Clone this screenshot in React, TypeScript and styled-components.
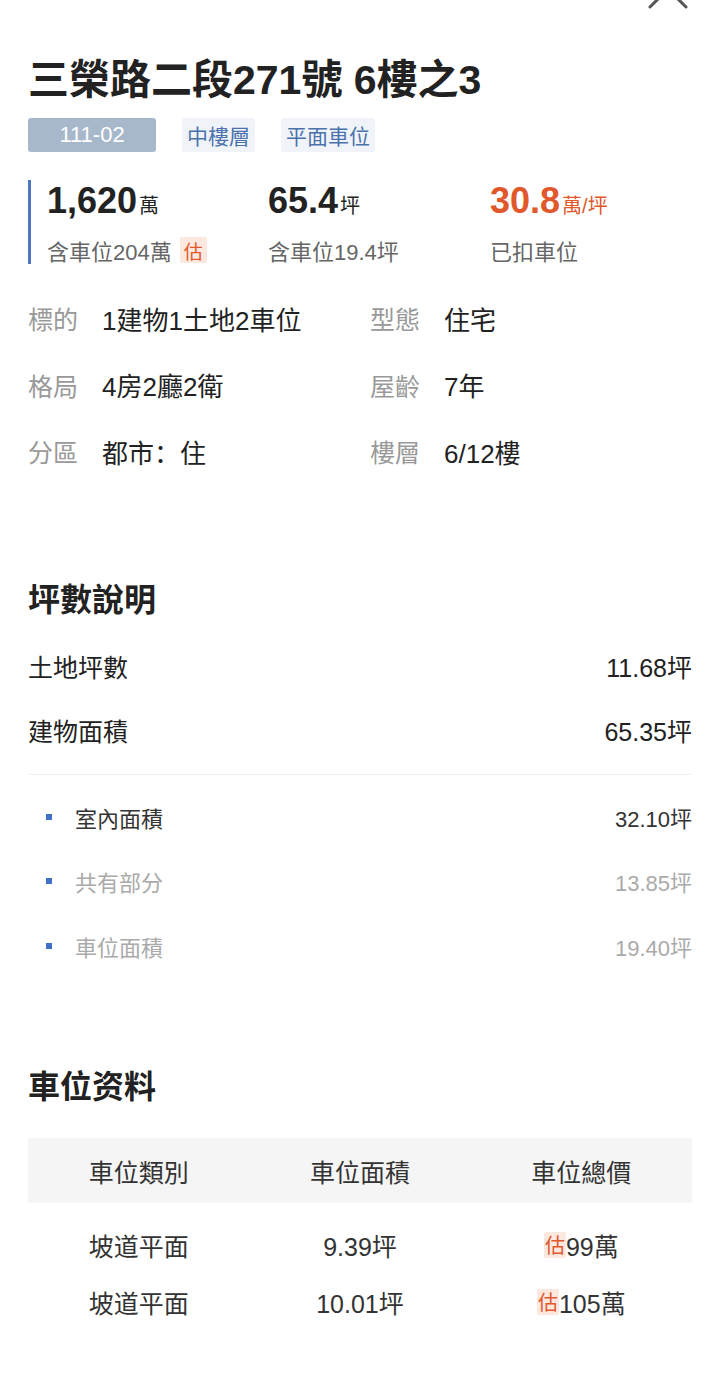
import React from "react";
import styled, { createGlobalStyle } from "styled-components";

const GlobalStyle = createGlobalStyle`
  html, body { margin: 0; padding: 0; background: #ffffff; }
  body {
    font-family: "Liberation Sans", "Noto Sans CJK SC", sans-serif;
    color: #222222;
    -webkit-font-smoothing: antialiased;
  }
  * { box-sizing: border-box; }
`;

const Page = styled.div`
  position: relative;
  width: 720px;
  min-height: 1378px;
  padding: 56px 28px 0;
  overflow: hidden;
`;

const CloseButton = styled.button`
  position: absolute;
  top: -31px;
  right: 32px;
  width: 40px;
  height: 40px;
  padding: 0;
  border: none;
  background: transparent;
  display: flex;
`;

const Title = styled.h1`
  margin: 0;
  font-size: 41px;
  line-height: 48px;
  font-weight: 700;
  color: #222222;
  letter-spacing: 0;
`;

const TagRow = styled.div`
  display: flex;
  gap: 26px;
  margin-top: 14px;
`;

const Tag = styled.span<{ $solid?: boolean }>`
  display: inline-flex;
  align-items: center;
  justify-content: center;
  height: 34px;
  padding: 0 5px;
  min-width: ${(p) => (p.$solid ? "128px" : "0")};
  border-radius: ${(p) => (p.$solid ? "3px" : "2px")};
  background: ${(p) => (p.$solid ? "#a8b8cb" : "#f0f4f9")};
  color: ${(p) => (p.$solid ? "#ffffff" : "#4b72ad")};
  font-size: ${(p) => (p.$solid ? "22px" : "21px")};
`;

const Stats = styled.div`
  display: grid;
  grid-template-columns: 221px 222px 1fr;
  margin-top: 28px;
  padding-left: 16px;
  border-left: 3px solid #4a78c2;
`;

const Stat = styled.div`
  display: flex;
  flex-direction: column;
`;

const BigValue = styled.div<{ $accent?: boolean }>`
  display: flex;
  align-items: baseline;
  height: 42px;
  line-height: 42px;
  font-size: 36px;
  font-weight: 700;
  color: ${(p) => (p.$accent ? "#e0582b" : "#222222")};
`;

const Unit = styled.span`
  margin-left: 2px;
  font-size: 20px;
  font-weight: 400;
`;

const SubText = styled.div`
  display: flex;
  align-items: center;
  gap: 8px;
  margin-top: 14px;
  height: 28px;
  font-size: 22px;
  color: #666666;
`;

const EstBadge = styled.span<{ $small?: boolean }>`
  display: inline-flex;
  align-items: center;
  justify-content: center;
  height: 26px;
  padding: 0 ${(p) => (p.$small ? "1px" : "4px")};
  border-radius: 2px;
  background: #fde8e0;
  color: #e0582b;
  font-size: ${(p) => (p.$small ? "20px" : "19px")};
`;

const InfoGrid = styled.div`
  display: grid;
  grid-template-columns: 342px 1fr;
  grid-auto-rows: 66.5px;
  margin-top: 21px;
`;

const InfoItem = styled.div`
  display: flex;
  align-items: center;
`;

const InfoLabel = styled.span`
  width: 74px;
  font-size: 25px;
  color: #999999;
`;

const InfoValue = styled.span`
  font-size: 26px;
  color: #222222;
`;

const SectionTitle = styled.h2<{ $gap: number }>`
  margin: ${(p) => p.$gap}px 0 0;
  font-size: 32px;
  line-height: 44px;
  font-weight: 700;
  color: #222222;
`;

const AreaList = styled.div`
  margin-top: 12px;
`;

const AreaRow = styled.div`
  display: flex;
  align-items: center;
  justify-content: space-between;
  height: 64px;
  font-size: 25px;
  color: #222222;
`;

const Divider = styled.div`
  height: 1px;
  margin: 12px 0 10px;
  background: #eeeeee;
`;

const SubRow = styled.div<{ $muted?: boolean }>`
  display: flex;
  align-items: center;
  height: 64.5px;
  padding-left: 18px;
  font-size: 22px;
  color: ${(p) => (p.$muted ? "#aaaaaa" : "#333333")};
`;

const Bullet = styled.span`
  width: 6px;
  height: 6px;
  margin-right: 23px;
  background: #3f72c6;
`;

const SubValue = styled.span`
  margin-left: auto;
`;

const Table = styled.div`
  margin-top: 29px;
`;

const TableRow = styled.div<{ $head?: boolean }>`
  display: grid;
  grid-template-columns: repeat(3, 1fr);
  align-items: center;
  height: ${(p) => (p.$head ? "65px" : "57px")};
  margin-bottom: ${(p) => (p.$head ? "13px" : "0")};
  background: ${(p) => (p.$head ? "#f5f5f5" : "transparent")};
  font-size: 25px;
  color: #333333;
`;

const Cell = styled.div`
  display: flex;
  align-items: center;
  justify-content: center;
`;

const CloseIcon = () => (
  <svg width="40" height="40" viewBox="0 0 40 40" fill="none">
    <path d="M2 38 L38 2 M2 2 L38 38" stroke="#555555" strokeWidth="3" strokeLinecap="round" />
  </svg>
);

const info = [
  ["標的", "1建物1土地2車位"],
  ["型態", "住宅"],
  ["格局", "4房2廳2衛"],
  ["屋齡", "7年"],
  ["分區", "都市：住"],
  ["樓層", "6/12樓"],
];

const subAreas = [
  { label: "室內面積", value: "32.10坪", muted: false },
  { label: "共有部分", value: "13.85坪", muted: true },
  { label: "車位面積", value: "19.40坪", muted: true },
];

const parking = [
  { type: "坡道平面", area: "9.39坪", price: "99萬" },
  { type: "坡道平面", area: "10.01坪", price: "105萬" },
];

export default function App() {
  return (
    <>
      <GlobalStyle />
      <Page>
        <CloseButton aria-label="close">
          <CloseIcon />
        </CloseButton>
        <Title>三榮路二段271號 6樓之3</Title>
        <TagRow>
          <Tag $solid>111-02</Tag>
          <Tag>中樓層</Tag>
          <Tag>平面車位</Tag>
        </TagRow>

        <Stats>
          <Stat>
            <BigValue>
              1,620<Unit>萬</Unit>
            </BigValue>
            <SubText>
              含車位204萬<EstBadge>估</EstBadge>
            </SubText>
          </Stat>
          <Stat>
            <BigValue>
              65.4<Unit>坪</Unit>
            </BigValue>
            <SubText>含車位19.4坪</SubText>
          </Stat>
          <Stat>
            <BigValue $accent>
              30.8<Unit>萬/坪</Unit>
            </BigValue>
            <SubText>已扣車位</SubText>
          </Stat>
        </Stats>

        <InfoGrid>
          {info.map(([label, value]) => (
            <InfoItem key={label}>
              <InfoLabel>{label}</InfoLabel>
              <InfoValue>{value}</InfoValue>
            </InfoItem>
          ))}
        </InfoGrid>

        <SectionTitle $gap={93}>坪數說明</SectionTitle>
        <AreaList>
          <AreaRow>
            <span>土地坪數</span>
            <span>11.68坪</span>
          </AreaRow>
          <AreaRow>
            <span>建物面積</span>
            <span>65.35坪</span>
          </AreaRow>
          <Divider />
          {subAreas.map((s) => (
            <SubRow key={s.label} $muted={s.muted}>
              <Bullet />
              <span>{s.label}</span>
              <SubValue>{s.value}</SubValue>
            </SubRow>
          ))}
        </AreaList>

        <SectionTitle $gap={87}>車位资料</SectionTitle>
        <Table>
          <TableRow $head>
            <Cell>車位類別</Cell>
            <Cell>車位面積</Cell>
            <Cell>車位總價</Cell>
          </TableRow>
          {parking.map((p, i) => (
            <TableRow key={i}>
              <Cell>{p.type}</Cell>
              <Cell>{p.area}</Cell>
              <Cell>
                <EstBadge $small>估</EstBadge>
                {p.price}
              </Cell>
            </TableRow>
          ))}
        </Table>
      </Page>
    </>
  );
}
